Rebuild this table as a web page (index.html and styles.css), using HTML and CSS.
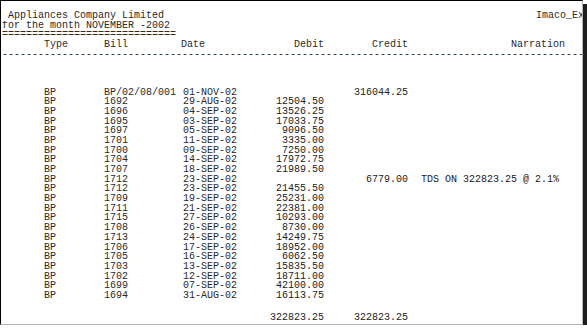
FILE: index.html
```html
<!DOCTYPE html>
<html>
<head>
<meta charset="utf-8">
<link rel="stylesheet" href="styles.css">
</head>
<body>
<div class="frame">
  <div class="report">
    <div class="title-row"><span class="pre"> Appliances Company Limited</span><span class="ref">Imaco_Export</span></div>
    <div class="line">for the month NOVEMBER -2002</div>
    <div class="line">=============================</div>
    <div class="row head">
      <span>Type</span><span>Bill</span><span class="date-h">Date</span><span class="num-h">Debit</span><span class="num-h">Credit</span><span class="narr-h">Narration</span>
    </div>
    <div class="line">-----------------------------------------------------------------------------------------------------------</div>
    <div class="blank3"></div>
    <div class="rows">
      <div class="row"><span>BP</span><span>BP/02/08/001</span><span>01-NOV-02</span><span class="num"></span><span class="num">316044.25</span><span class="narr"></span></div>
      <div class="row"><span>BP</span><span>1692</span><span>29-AUG-02</span><span class="num">12504.50</span><span class="num"></span><span class="narr"></span></div>
      <div class="row"><span>BP</span><span>1696</span><span>04-SEP-02</span><span class="num">13526.25</span><span class="num"></span><span class="narr"></span></div>
      <div class="row"><span>BP</span><span>1695</span><span>03-SEP-02</span><span class="num">17033.75</span><span class="num"></span><span class="narr"></span></div>
      <div class="row"><span>BP</span><span>1697</span><span>05-SEP-02</span><span class="num">9096.50</span><span class="num"></span><span class="narr"></span></div>
      <div class="row"><span>BP</span><span>1701</span><span>11-SEP-02</span><span class="num">3335.00</span><span class="num"></span><span class="narr"></span></div>
      <div class="row"><span>BP</span><span>1700</span><span>09-SEP-02</span><span class="num">7250.00</span><span class="num"></span><span class="narr"></span></div>
      <div class="row"><span>BP</span><span>1704</span><span>14-SEP-02</span><span class="num">17972.75</span><span class="num"></span><span class="narr"></span></div>
      <div class="row"><span>BP</span><span>1707</span><span>18-SEP-02</span><span class="num">21989.50</span><span class="num"></span><span class="narr"></span></div>
      <div class="row"><span>BP</span><span>1712</span><span>23-SEP-02</span><span class="num"></span><span class="num">6779.00</span><span class="narr">TDS ON 322823.25 @ 2.1%</span></div>
      <div class="row"><span>BP</span><span>1712</span><span>23-SEP-02</span><span class="num">21455.50</span><span class="num"></span><span class="narr"></span></div>
      <div class="row"><span>BP</span><span>1709</span><span>19-SEP-02</span><span class="num">25231.00</span><span class="num"></span><span class="narr"></span></div>
      <div class="row"><span>BP</span><span>1711</span><span>21-SEP-02</span><span class="num">22381.00</span><span class="num"></span><span class="narr"></span></div>
      <div class="row"><span>BP</span><span>1715</span><span>27-SEP-02</span><span class="num">10293.00</span><span class="num"></span><span class="narr"></span></div>
      <div class="row"><span>BP</span><span>1708</span><span>26-SEP-02</span><span class="num">8730.00</span><span class="num"></span><span class="narr"></span></div>
      <div class="row"><span>BP</span><span>1713</span><span>24-SEP-02</span><span class="num">14249.75</span><span class="num"></span><span class="narr"></span></div>
      <div class="row"><span>BP</span><span>1706</span><span>17-SEP-02</span><span class="num">18952.00</span><span class="num"></span><span class="narr"></span></div>
      <div class="row"><span>BP</span><span>1705</span><span>16-SEP-02</span><span class="num">6062.50</span><span class="num"></span><span class="narr"></span></div>
      <div class="row"><span>BP</span><span>1703</span><span>13-SEP-02</span><span class="num">15835.50</span><span class="num"></span><span class="narr"></span></div>
      <div class="row"><span>BP</span><span>1702</span><span>12-SEP-02</span><span class="num">18711.00</span><span class="num"></span><span class="narr"></span></div>
      <div class="row"><span>BP</span><span>1699</span><span>07-SEP-02</span><span class="num">42100.00</span><span class="num"></span><span class="narr"></span></div>
      <div class="row"><span>BP</span><span>1694</span><span>31-AUG-02</span><span class="num">16113.75</span><span class="num"></span><span class="narr"></span></div>
    </div>
    <div class="row totals"><span></span><span></span><span></span><span class="num">322823.25</span><span class="num">322823.25</span><span class="narr"></span></div>
  </div>
</div>
</body>
</html>
```

FILE: styles.css
```css
html, body {
  margin: 0;
  padding: 0;
  background: #ffffff;
}

.frame {
  width: 581px;
  height: 323px;
  border: 1px solid #000000;
  border-right-color: #b4b4b4;
  border-bottom-color: #b4b4b4;
  box-shadow: 4px 4px 0 #1e1e1e;
  background: #ffffff;
  overflow: hidden;
}

.report {
  padding: 10px 0 0 1px;
  font-family: "Liberation Mono", "Courier New", monospace;
  font-size: 10px;
  line-height: 9.7px;
  color: #2a2a2a;
  white-space: nowrap;
}

.title-row {
  display: grid;
  grid-template-columns: 534px auto;
  height: 9.7px;
}

.pre {
  white-space: pre;
}

.line {
  height: 9.7px;
  overflow: hidden;
}

.blank3 {
  height: 28.1px;
}

.row {
  display: grid;
  grid-template-columns: 60px 79px 82px 59px 84px 1fr;
  padding-left: 42px;
  height: 9.7px;
}

.num {
  text-align: right;
  color: #222222;
}

.num-h {
  text-align: right;
}

.date-h {
  margin-left: -2px;
}

.narr {
  padding-left: 13px;
  color: #222222;
}

.narr-h {
  padding-left: 103px;
}

.totals {
  margin-top: 12px;
}
```
